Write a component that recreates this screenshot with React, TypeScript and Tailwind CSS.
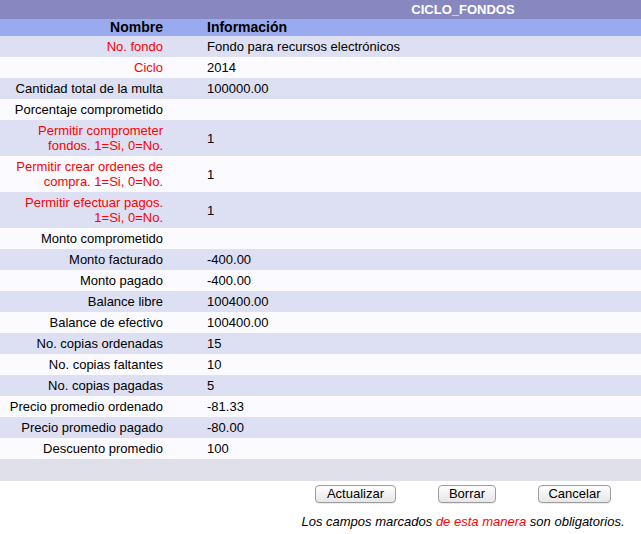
import React from 'react';

type Row = { label: string; value: string; required?: boolean };

const rows: Row[] = [
  { label: 'No. fondo', value: 'Fondo para recursos electrónicos', required: true },
  { label: 'Ciclo', value: '2014', required: true },
  { label: 'Cantidad total de la multa', value: '100000.00' },
  { label: 'Porcentaje comprometido', value: '' },
  { label: 'Permitir comprometer fondos. 1=Si, 0=No.', value: '1', required: true },
  { label: 'Permitir crear ordenes de compra. 1=Si, 0=No.', value: '1', required: true },
  { label: 'Permitir efectuar pagos. 1=Si, 0=No.', value: '1', required: true },
  { label: 'Monto comprometido', value: '' },
  { label: 'Monto facturado', value: '-400.00' },
  { label: 'Monto pagado', value: '-400.00' },
  { label: 'Balance libre', value: '100400.00' },
  { label: 'Balance de efectivo', value: '100400.00' },
  { label: 'No. copias ordenadas', value: '15' },
  { label: 'No. copias faltantes', value: '10' },
  { label: 'No. copias pagadas', value: '5' },
  { label: 'Precio promedio ordenado', value: '-81.33' },
  { label: 'Precio promedio pagado', value: '-80.00' },
  { label: 'Descuento promedio', value: '100' },
];

function MacButton({ label, width }: { label: string; width: string }) {
  return (
    <button
      className={`${width} h-[18px] rounded-[4px] border border-[#9c9c9c] bg-gradient-to-b from-[#ffffff] to-[#e6e6e6] text-[13px] leading-[16px] text-black shadow-[0_1px_0_rgba(0,0,0,0.08)]`}
    >
      {label}
    </button>
  );
}

export default function App() {
  return (
    <div className="w-[641px] h-[534px] bg-white text-black font-['Liberation_Sans',Arial,sans-serif] text-[13px] leading-[15px]">
      {/* title bar */}
      <div className="flex h-[19px] bg-[#8888c0]">
        <div className="w-[285px]" />
        <div className="flex-1 text-center font-bold text-white leading-[19px]">CICLO_FONDOS</div>
      </div>

      {/* column headers */}
      <div className="flex h-[17px] bg-[#99aaee] text-[14px] font-bold leading-[17px]">
        <div className="w-[169px] pl-[5px] pr-[6px] text-right">Nombre</div>
        <div className="pl-[38px]">Información</div>
      </div>

      {rows.map((row, i) => (
        <div
          key={row.label}
          className={`flex items-center py-[3px] ${i % 2 === 0 ? 'bg-[#dddff3]' : 'bg-[#fbfbff]'}`}
        >
          <div
            className={`w-[169px] shrink-0 pl-[5px] pr-[6px] text-right ${row.required ? 'text-[#ff0000]' : ''}`}
          >
            {row.label}
          </div>
          <div className="pl-[38px] min-h-[15px]">{row.value}</div>
        </div>
      ))}

      <div className="h-[22px] bg-[#e0e0ea]" />

      <div className="flex">
        <div className="w-[285px]" />
        <div className="flex-1 flex flex-col items-center">
          <div className="mt-[4px] flex gap-[42px]">
            <MacButton label="Actualizar" width="w-[81px]" />
            <MacButton label="Borrar" width="w-[58px]" />
            <MacButton label="Cancelar" width="w-[73px]" />
          </div>
          <p className="mt-[11px] italic">
            Los campos marcados <span className="text-[#ff0000]">de esta manera</span> son obligatorios.
          </p>
        </div>
      </div>
    </div>
  );
}
